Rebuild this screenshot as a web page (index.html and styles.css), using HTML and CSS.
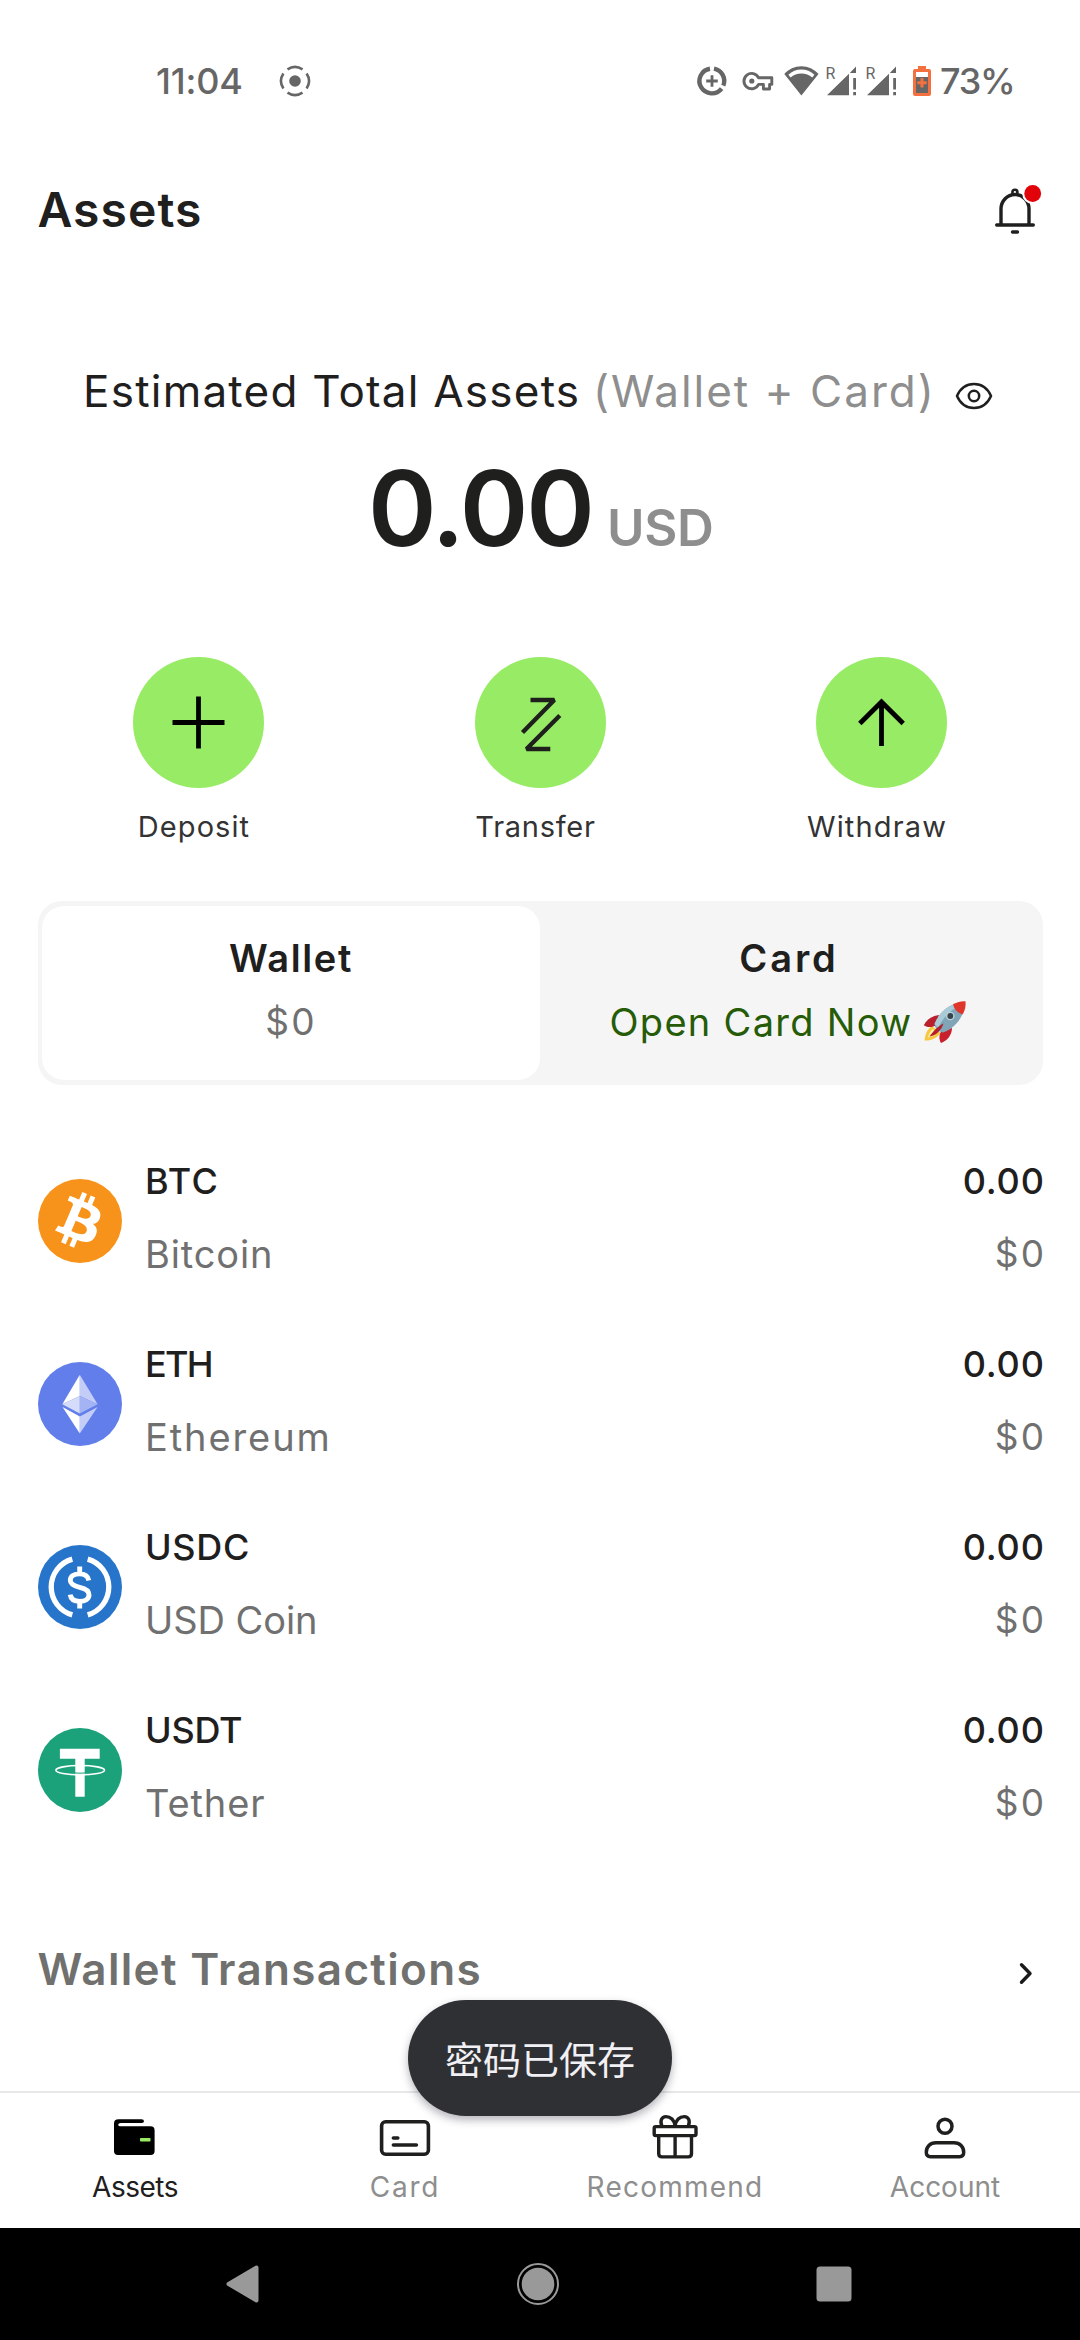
FILE: index.html
```html
<!DOCTYPE html>
<html lang="en">
<head>
<meta charset="utf-8">
<title>Assets</title>
<link rel="stylesheet" href="styles.css">
</head>
<body>
<div class="screen">
  <header class="status">
    <span class="status-time">11:04</span>
    <svg class="status-cast" width="30" height="30" viewBox="0 0 30 30" fill="none" stroke="#666" stroke-width="2.6">
      <circle cx="15" cy="15" r="5.8" fill="#666" stroke="none"/>
      <path d="M7.5 3.4A13.6 13.6 0 0 1 22.5 3.4M7.5 26.6A13.6 13.6 0 0 0 22.5 26.6M3.4 7.5A13.6 13.6 0 0 0 3.4 22.5M26.6 7.5A13.6 13.6 0 0 1 26.6 22.5"/>
    </svg>
    <div class="status-right">
      <svg width="32" height="32" viewBox="0 0 32 32" fill="none" stroke="#666">
        <path stroke-width="4.4" d="M14 3.7A12.4 12.4 0 1 0 25.6 23.6M18 3.7A12.4 12.4 0 0 1 27.3 20.6"/>
        <path stroke-width="2.8" d="M16 10.2V21.8M10.2 16H21.8"/>
      </svg>
      <svg class="status-key" width="32" height="32" viewBox="0 0 32 32" fill="none" stroke="#666" stroke-width="2.9" stroke-linejoin="round">
        <path d="M16.6 12.8A7.7 7.7 0 1 0 16.6 19.4H21.4V24H27.6V19.4H29.8V12.8Z"/>
        <circle cx="9.8" cy="16" r="2.6" fill="#666" stroke="none"/>
      </svg>
      <svg class="status-wifi" width="35" height="30" viewBox="0 0 35 30">
        <path fill="#666" fill-rule="evenodd" d="M17.4 .2C10.7 .2 4.6 3.2 .3 8L17.4 29.4L34.5 8C30.2 3.2 24.1 .2 17.4 .2ZM4.4 8.7C8 5.2 12.5 3.5 17.4 3.5C22.3 3.5 26.8 5.2 30.4 8.7L28.2 11.4C25.3 8.9 21.5 7.6 17.4 7.6C13.3 7.6 9.5 8.9 6.6 11.4Z"/>
      </svg>
      <svg class="status-signal-one" width="31" height="30" viewBox="0 0 31 30" fill="#666">
        <text class="roam" x="-.5" y="12.5">R</text>
        <path d="M1 29.3L23 7.8V29.3ZM23.8 7L30 .4V7ZM27.2 12H30V23.5H27.2ZM27.2 26H30V29.3H27.2Z"/>
      </svg>
      <svg class="status-signal-two" width="31" height="30" viewBox="0 0 31 30" fill="#666">
        <text class="roam" x="-.5" y="12.5">R</text>
        <path d="M1 29.3L23 7.8V29.3ZM23.8 7L30 .4V7ZM27.2 12H30V23.5H27.2ZM27.2 26H30V29.3H27.2Z"/>
      </svg>
      <svg class="status-battery" width="18" height="30" viewBox="0 0 18 30">
        <path fill="#f4713f" d="M5 0H13V3H16Q18 3 18 5V28Q18 30 16 30H2Q0 30 0 28V5Q0 3 2 3H5Z"/>
        <path fill="#fff" d="M3 6H15V11H3Z"/>
        <path fill="#666" d="M3 11H15V27H3Z"/>
        <path stroke="#f4713f" stroke-width="3" d="M9 12V21.5M4.3 16.7H13.7"/>
      </svg>
      <span class="status-percent">73%</span>
    </div>
  </header>

  <main class="content">
    <div class="titlebar">
      <h1 class="title">Assets</h1>
      <svg width="52" height="52" viewBox="0 0 52 52" fill="none" stroke="#1f201e" stroke-width="3.4" stroke-linecap="round">
        <path d="M9 40V25A14 14.5 0 0 1 37 25V40M4.7 41H41.3M20.5 48H25.5"/>
        <circle cx="22.9" cy="8.3" r="2.5" stroke-width="2.6"/>
        <circle cx="40.7" cy="9.5" r="10.5" fill="#fff" stroke="none"/>
        <circle cx="40.7" cy="9.5" r="8.4" fill="#e20209" stroke="none"/>
      </svg>
    </div>

    <section class="total">
      <div class="total-label">
        <span class="total-main">Estimated Total Assets</span>
        <span class="total-scope">(Wallet + Card)</span>
        <svg class="eye" width="38" height="28" viewBox="0 0 38 28" fill="none" stroke="#1f201e" stroke-width="2.5">
          <path d="M2 14C5.5 6 11.5 2 19 2S32.5 6 36 14C32.5 22 26.5 26 19 26S5.5 22 2 14Z"/>
          <circle cx="19" cy="14" r="5.2"/>
        </svg>
      </div>
      <div class="total-value">
        <span class="amount">0.00</span>
        <span class="unit">USD</span>
      </div>
    </section>

    <section class="actions">
      <div class="action">
        <svg class="action-icon" width="131" height="131" viewBox="0 0 131 131" fill="none" stroke="#000" stroke-width="4.8"><path d="M65.5 39.5V91.5M39.5 65.5H91.5"/></svg>
        <span class="action-label deposit">Deposit</span>
      </div>
      <div class="action">
        <svg class="action-icon" width="131" height="131" viewBox="0 0 131 131" fill="none" stroke="#1f201e" stroke-width="4.4" stroke-linejoin="bevel"><path d="M55.5 43H79.3L47.5 75.5M84.8 58.5L51.5 92H75.3"/></svg>
        <span class="action-label transfer">Transfer</span>
      </div>
      <div class="action">
        <svg class="action-icon" width="131" height="131" viewBox="0 0 131 131" fill="none" stroke="#000" stroke-width="4.8"><path d="M65.5 89V45M43.8 66.5L65.5 45L87.2 66.5"/></svg>
        <span class="action-label withdraw">Withdraw</span>
      </div>
    </section>

    <section class="tabs">
      <div class="tab tab-active">
        <strong class="tab-name wallet">Wallet</strong>
        <span class="tab-sub money">$0</span>
      </div>
      <div class="tab">
        <strong class="tab-name card">Card</strong>
        <span class="tab-sub tab-open">Open Card Now
          <svg width="45" height="45" viewBox="0 0 45 45">
            <path fill="#f6c944" d="M9 26C4 29 2 35 1.5 40.5C8 41 14 38 17.5 33Z"/>
            <path fill="#fff0a8" d="M10 29C7 31 5.5 34.5 5 37.5C9 37 12.5 35 14.5 32Z"/>
            <path fill="#b91f2d" d="M16 15C9 16 3.5 19.5 .8 25.3C5 28 10 27.5 13 25Z"/>
            <path fill="#c8202f" d="M29 28C29 35 24 41 18 43C15.5 39 16 34 19 30Z"/>
            <path fill="#7fa5b6" d="M31.5 4C23 7 15.5 14 11.5 24Q12 31 20 32.5C30 29 37 21 40 12.5Z"/>
            <path fill="#a9cad7" d="M31.5 4C23 7 15.5 14 11.5 24L15 28C20 18 27 10 35 7Z"/>
            <path fill="#e0352b" d="M42.5 1.2C37 1 33 2.5 30 4.6Q32 12 39.5 14.5C42 10.5 43 6 42.5 1.2Z"/>
            <path fill="#b51f2c" d="M20.5 23.5C15 26 10 31.5 6.5 36.5C12 36 18 31 20.5 23.5Z"/>
            <circle cx="27.3" cy="16" r="4.3" fill="#bcd2da"/>
            <circle cx="27.3" cy="16" r="2.9" fill="#35434c"/>
          </svg>
        </span>
      </div>
    </section>

    <section class="coins">
      <div class="coin">
        <svg class="coin-icon" width="84" height="84" viewBox="0 0 32 32">
          <circle cx="16" cy="16" r="16" fill="#f7931a"/>
          <path fill="#fff" transform="rotate(9 16 16) translate(-1.6 -1.5) scale(1.075)" d="M23.189 14.02c.314-2.096-1.283-3.223-3.465-3.975l.708-2.84-1.728-.43-.69 2.765c-.454-.114-.92-.22-1.385-.326l.695-2.783L15.596 6l-.708 2.839c-.376-.086-.746-.17-1.104-.26l.002-.009-2.384-.595-.46 1.846s1.283.294 1.256.312c.7.175.826.638.805 1.006l-.806 3.235c.048.012.11.03.18.057l-.183-.045-1.13 4.532c-.086.212-.303.531-.793.41.018.025-1.256-.313-1.256-.313l-.858 1.978 2.25.561c.418.105.828.215 1.231.318l-.715 2.872 1.727.43.708-2.84c.472.127.93.245 1.378.357l-.706 2.828 1.728.43.715-2.866c2.948.558 5.164.333 6.097-2.333.752-2.146-.037-3.385-1.588-4.192 1.13-.26 1.98-1.003 2.207-2.538zm-3.95 5.538c-.533 2.147-4.148.986-5.32.695l.95-3.805c1.172.293 4.929.872 4.37 3.11zm.535-5.569c-.487 1.953-3.495.96-4.47.717l.86-3.45c.975.243 4.118.696 3.61 2.733z"/>
        </svg>
        <div class="coin-text"><span class="symbol btc">BTC</span><span class="name bitcoin">Bitcoin</span></div>
        <div class="coin-value"><span class="qty">0.00</span><span class="fiat">$0</span></div>
      </div>
      <div class="coin">
        <svg class="coin-icon" width="84" height="84" viewBox="0 0 84 84">
          <circle cx="42" cy="42" r="42" fill="#627eea"/>
          <path fill="#fff" d="M41.8 12.7V34L24.3 42.3ZM41.8 54.5V71.5L24.5 45Z"/>
          <path fill="#c3cdf8" d="M41.8 12.7V34L59.6 42.3ZM41.8 54.5V71.5L59.6 45Z"/>
          <path fill="#d5dcfa" d="M41.8 34L24.3 42.3L41.8 51.5Z"/>
          <path fill="#a3b3f4" d="M41.8 34L59.6 42.3L41.8 51.5Z"/>
        </svg>
        <div class="coin-text"><span class="symbol eth">ETH</span><span class="name ethereum">Ethereum</span></div>
        <div class="coin-value"><span class="qty">0.00</span><span class="fiat">$0</span></div>
      </div>
      <div class="coin">
        <svg class="coin-icon" width="84" height="84" viewBox="0 0 84 84" fill="none" stroke="#fff">
          <circle cx="42" cy="42" r="42" fill="#2775ca" stroke="none"/>
          <path stroke-width="5.3" d="M34.3 14.1A29 29 0 0 0 34.3 69.9M49.7 14.1A29 29 0 0 1 49.7 69.9"/>
          <path stroke-width="4.9" d="M50.8 35.5C50 31 46.5 28.9 41.7 28.9C36 28.9 32.3 31.3 32.3 35.3C32.3 39.5 36 41 41.7 42.3C47.5 43.5 51 45.3 51 49.7C51 54 47 56.4 41.7 56.4C36.3 56.4 32.8 54 32.2 49.7M41.7 21.5V28.5M41.7 57V63.5"/>
        </svg>
        <div class="coin-text"><span class="symbol usdc">USDC</span><span class="name usd-coin">USD Coin</span></div>
        <div class="coin-value"><span class="qty">0.00</span><span class="fiat">$0</span></div>
      </div>
      <div class="coin">
        <svg class="coin-icon" width="84" height="84" viewBox="0 0 84 84">
          <circle cx="42" cy="42" r="42" fill="#1ba27a"/>
          <ellipse cx="42.2" cy="42.2" rx="24.3" ry="4.7" fill="none" stroke="#fff" stroke-width="1.6"/>
          <path fill="#fff" d="M21.9 20.8H61.7V30.7H46.7V68.7H37.3V30.7H21.9Z"/>
          <path fill="none" stroke="#1ba27a" stroke-width="1" d="M36 44.9Q42 45.5 48 44.9"/>
        </svg>
        <div class="coin-text"><span class="symbol usdt">USDT</span><span class="name tether">Tether</span></div>
        <div class="coin-value"><span class="qty">0.00</span><span class="fiat">$0</span></div>
      </div>
    </section>

    <div class="history">
      <h2 class="history-title">Wallet Transactions</h2>
      <svg class="history-more" width="16" height="25" viewBox="0 0 16 25" fill="none" stroke="#1a1a1a" stroke-width="3.4" stroke-linecap="round" stroke-linejoin="round"><path d="M3.5 3.8L12 12.5L3.5 21.2"/></svg>
    </div>
  </main>

  <nav class="tabbar">
    <div class="tabbar-item tabbar-current">
      <svg width="54" height="54" viewBox="0 0 54 54">
        <path d="M10.5 9.3H33.5Q36 9.3 36 11.2T33.5 13H13Q10.2 13 10.2 14.8T13 16.3H42.5Q46.6 16.3 46.6 20.5V41Q46.6 45 42.5 45H10Q6 45 6 41V13.5Q6 9.3 10.5 9.3Z"/>
        <rect x="32" y="28" width="10.5" height="3.6" rx=".8" fill="#98ec65"/>
      </svg>
      <span class="nav-assets">Assets</span>
    </div>
    <div class="tabbar-item">
      <svg width="54" height="54" viewBox="0 0 54 54" fill="none" stroke="#1f201e" stroke-width="3.6" stroke-linecap="round">
        <rect x="3.6" y="11.8" width="46.8" height="32.4" rx="4"/>
        <path d="M15.4 28H19.8M15.4 35H38.4"/>
      </svg>
      <span class="nav-card">Card</span>
    </div>
    <div class="tabbar-item">
      <svg width="54" height="54" viewBox="0 0 54 54" fill="none" stroke="#1f201e" stroke-width="3.4" stroke-linejoin="round">
        <rect x="6.2" y="16.6" width="41.8" height="9" rx="1.6"/>
        <path d="M10.7 26V43.5Q10.7 46.9 14 46.9H40.2Q43.5 46.9 43.5 43.5V26M27.1 26V46.5"/>
        <path d="M27.1 16C26.5 10 22.5 6.6 18 6.6C13.5 6.6 11.8 11 13.8 16M27.1 16C27.7 10 31.7 6.6 36.2 6.6C40.7 6.6 42.4 11 40.4 16"/>
      </svg>
      <span class="nav-recommend">Recommend</span>
    </div>
    <div class="tabbar-item">
      <svg width="54" height="54" viewBox="0 0 54 54" fill="none" stroke="#1f201e" stroke-width="3.5">
        <circle cx="27" cy="16.3" r="7"/>
        <path d="M18 32.8H36C42 32.8 45.7 37 45.7 42.3Q45.7 46.7 41.5 46.7H12.5Q8.3 46.7 8.3 42.3C8.3 37 12 32.8 18 32.8Z"/>
      </svg>
      <span class="nav-account">Account</span>
    </div>
  </nav>

  <footer class="system">
    <svg width="36" height="42" viewBox="0 0 36 42"><path d="M3.5 21L31.5 4.5V37.5Z" fill="#999" stroke="#999" stroke-width="4" stroke-linejoin="round"/></svg>
    <svg width="42" height="42" viewBox="0 0 42 42"><circle cx="21" cy="21" r="20" fill="none" stroke="#999" stroke-width="2"/><circle cx="21" cy="21" r="16.3" fill="#999"/></svg>
    <svg width="36" height="42" viewBox="0 0 36 42"><rect x=".5" y="3.5" width="35" height="35" rx="3.5" fill="#999"/></svg>
  </footer>

  <div class="toast" lang="zh-CN">密码已保存</div>
</div>
</body>
</html>
```
FILE: styles.css
```css
* { box-sizing: border-box; margin: 0; padding: 0; }
body { font-family: "Inter", "Noto Sans CJK SC", sans-serif; color: #1f201e; background: #fff; }
svg { display: block; flex: none; overflow: visible; }
.screen { position: relative; display: flex; flex-direction: column; width: 1080px; height: 2340px; overflow: hidden; white-space: nowrap; }

.status { display: flex; align-items: center; height: 162px; padding-left: 156px; color: #666; font-size: 36px; font-weight: 500; }
.status-time { width: 124px; letter-spacing: -.2px; }
.status-right { display: flex; align-items: center; margin-left: auto; width: 384px; }
.status-key { margin-left: 14px; }
.status-wifi { margin-left: 10px; }
.status-signal-one { margin-left: 7px; }
.status-signal-two { margin-left: 9px; }
.status-battery { margin-left: 16px; }
.status-percent { margin-left: 9px; letter-spacing: -1.3px; }
.roam { font: 16px Roboto, sans-serif; }

.content { display: flex; flex-direction: column; height: 1929px; }
.titlebar { display: flex; align-items: center; justify-content: space-between; height: 96px; padding: 0 36px 0 37.5px; }
.title { margin-top: -2px; font-size: 48px; font-weight: 600; letter-spacing: 1.05px; }

.total { margin-top: 93px; }
.total-label { display: flex; align-items: center; height: 80px; padding-left: 83px; font-size: 44px; }
.total-main { width: 510px; letter-spacing: 1.23px; }
.total-scope { width: 362px; letter-spacing: 2px; color: #8e8e8e; }
.eye { margin-top: 10px; }
.total-value { display: flex; align-items: baseline; height: 120px; line-height: 120px; margin-top: 17px; padding-left: 368px; font-weight: 600; }
.amount { width: 239px; font-size: 104px; letter-spacing: -2.1px; }
.unit { font-size: 51px; letter-spacing: -.35px; color: #8e8e8e; }

.actions { display: flex; justify-content: space-between; margin-top: 89px; padding: 0 133px; }
.action { display: flex; flex-direction: column; align-items: center; width: 131px; }
.action-icon { border-radius: 50%; background: #98ec65; }
.action-label { margin: 22px 9px 0 0; font-size: 29px; line-height: 34px; color: #333; }
.deposit { letter-spacing: 1.08px; }
.transfer { letter-spacing: .74px; }
.withdraw { letter-spacing: 1.14px; }

.tabs { display: flex; height: 184px; margin: 57px 37.5px 0; padding: 5px 4.5px; border-radius: 24px; background: #f5f5f5; }
.tab { display: flex; flex: 1; flex-direction: column; align-items: center; gap: 14px; padding-top: 27px; border-radius: 22px; font-size: 38px; line-height: 50px; }
.tab-active { background: #fff; }
.tab-name { font-weight: 600; }
.wallet { letter-spacing: 1.6px; }
.card { letter-spacing: 2.9px; }
.tab-sub { letter-spacing: 1.29px; }
.money { font-size: 37px; letter-spacing: 2.2px; color: #707070; }
.tab-open { display: flex; align-items: center; gap: 11px; color: #265c08; }

.coins { margin-top: 44.5px; padding: 0 37.5px; }
.coin { display: flex; height: 183px; padding-top: 26px; font-size: 36px; line-height: 50px; }
.coin-icon { margin-top: 23.5px; }
.coin-text, .coin-value { display: flex; flex-direction: column; gap: 23px; }
.coin-text { margin-left: 23.5px; }
.coin-value { align-items: flex-end; margin-left: auto; }
.symbol, .qty { font-weight: 500; }
.name, .fiat { color: #707070; }
.name { font-size: 38px; }
.btc { letter-spacing: 1.24px; }
.eth { letter-spacing: -1.7px; }
.usdc { letter-spacing: .71px; }
.usdt { letter-spacing: -.26px; }
.bitcoin { letter-spacing: .88px; }
.ethereum { letter-spacing: 1.9px; }
.usd-coin { letter-spacing: -.06px; }
.tether { letter-spacing: .9px; }
.qty { margin-right: -2.3px; letter-spacing: .85px; }
.fiat { margin-right: -3.8px; font-size: 37px; letter-spacing: 2.2px; }

.history { display: flex; align-items: center; justify-content: space-between; height: 60px; margin-top: 77px; padding: 0 46px 0 37.5px; }
.history-title { font-size: 44px; font-weight: 600; letter-spacing: 1.33px; color: #70706e; }
.history-more { margin-top: 10px; }

.tabbar { display: flex; height: 137px; padding-top: 17px; border-top: 2px solid #e8e8e8; font-size: 28px; line-height: 32px; color: #8e8e8e; }
.tabbar-item { display: flex; flex: 1; flex-direction: column; align-items: center; gap: 7px; }
.tabbar-current { color: #1f201e; }
.nav-assets { letter-spacing: -.5px; }
.nav-card { letter-spacing: 1.75px; }
.nav-recommend { letter-spacing: 1.23px; }
.nav-account { letter-spacing: 0; }

.system { display: flex; align-items: center; justify-content: space-between; height: 112px; padding: 0 228.5px 0 225px; background: #000; }

.toast { position: absolute; left: 408px; top: 2000px; width: 264px; height: 116px; border-radius: 58px; background: #2f3034; color: #f1f0f4; font: 38px/116px "Noto Sans CJK SC", sans-serif; text-align: center; box-shadow: 0 4px 9px rgba(40, 40, 60, .35); }
```
